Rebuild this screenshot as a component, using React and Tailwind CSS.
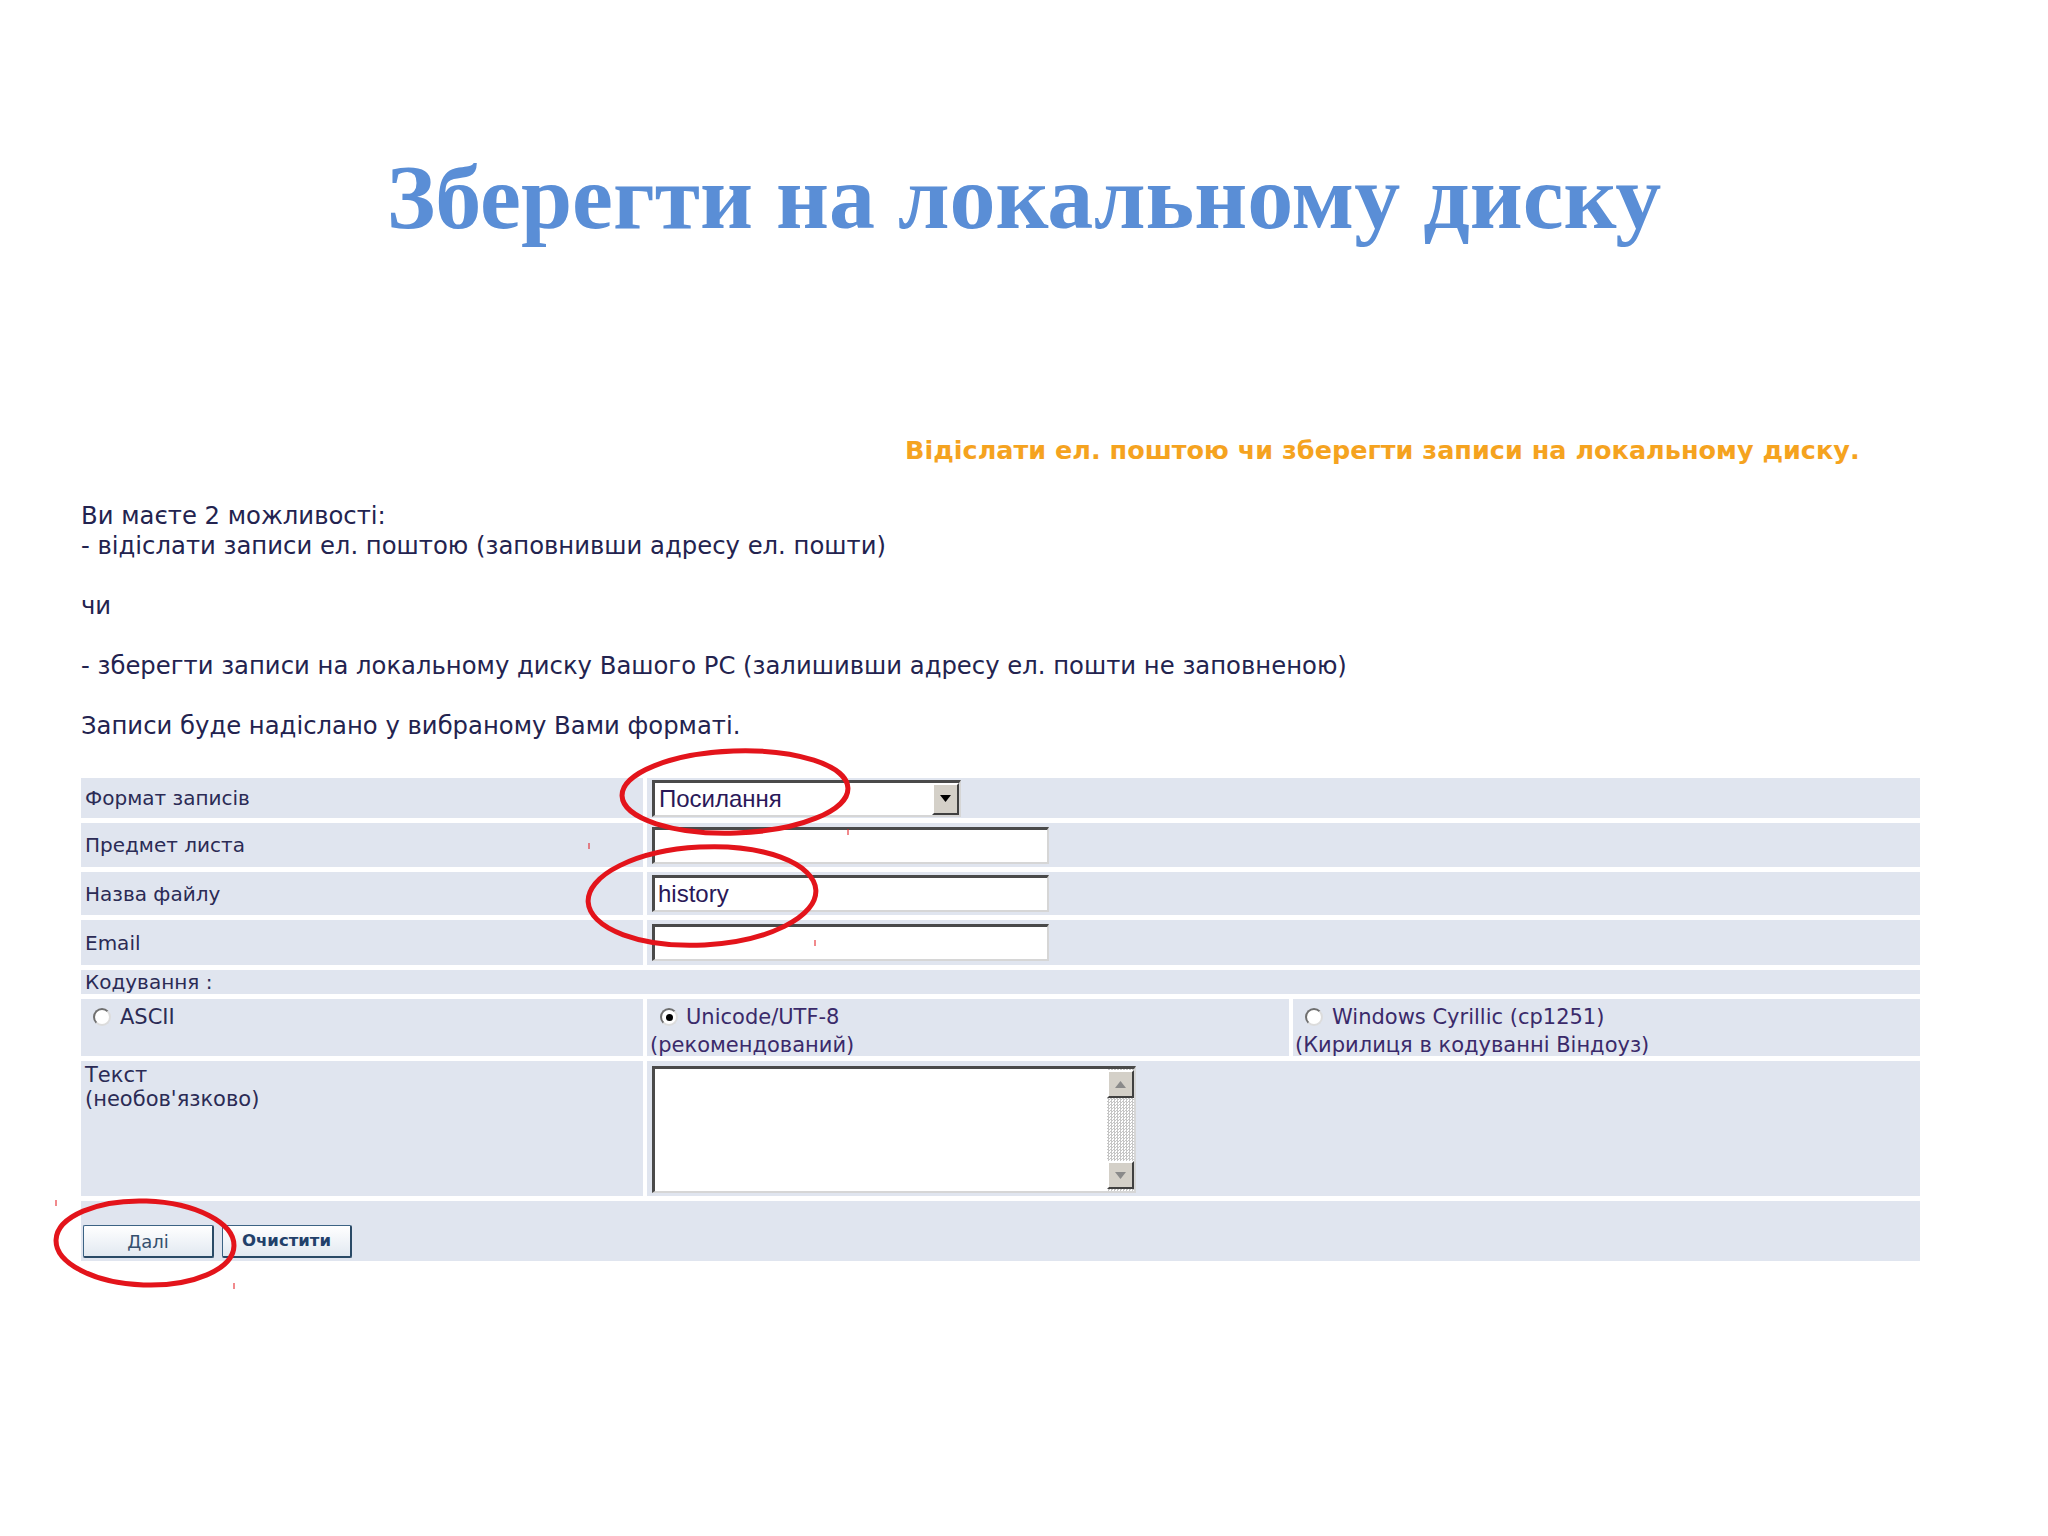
import React from "react"

function Radio({ checked }) {
  return (
    <span className="inline-flex h-[18px] w-[18px] shrink-0 items-center justify-center rounded-full border-2 border-t-[#6f6f6f] border-l-[#6f6f6f] border-b-[#dcdcdc] border-r-[#dcdcdc] bg-white">
      {checked && <span className="h-[7px] w-[7px] rounded-full bg-black" />}
    </span>
  )
}

function Field({ value, className = "" }) {
  return (
    <div className={`flex items-center border-t-[3px] border-l-[3px] border-b-2 border-r-2 border-t-[#4a4a4a] border-l-[#4a4a4a] border-b-[#d6d6d6] border-r-[#d6d6d6] bg-white pl-[3px] font-['Liberation_Sans',Arial,sans-serif] text-[24px] text-[#2a1858] ${className}`}>
      {value}
    </div>
  )
}

function ScrollBtn({ up }) {
  return (
    <div className="flex h-[28px] w-[27px] items-center justify-center border-2 border-t-white border-l-white border-b-[#404040] border-r-[#404040] bg-[#d4d0c8]">
      <svg width="11" height="7" viewBox="0 0 11 7">
        {up ? <path d="M0 7 L5.5 0 L11 7 Z" fill="#8a8a8a" /> : <path d="M0 0 L5.5 7 L11 0 Z" fill="#8a8a8a" />}
      </svg>
    </div>
  )
}

function Row({ label, children, h }) {
  return (
    <div className={`flex gap-[4px] ${h}`}>
      <div className="flex w-[562px] items-center bg-[#e0e5ef] px-[4px]">{label}</div>
      <div className="flex flex-1 items-center bg-[#e0e5ef] px-[5px]">{children}</div>
    </div>
  )
}

export default function App() {
  return (
    <div className="relative min-h-[1536px] w-[2048px] bg-white font-['DejaVu_Sans',Verdana,sans-serif]">
      <h1 className="pt-[150px] text-center font-['Liberation_Serif','Times_New_Roman',serif] text-[92px] font-bold leading-[94px] text-[#5a8ed6]">
        Зберегти на локальному диску
      </h1>

      <p className="mt-[191px] pl-[905px] text-[25.5px] font-bold leading-[30px] text-[#f5a31f]">
        Відіслати ел. поштою чи зберегти записи на локальному диску.
      </p>

      <div className="mt-[36px] pl-[81px] text-[24.3px] leading-[30px] text-[#23234f]">
        <p>Ви маєте 2 можливості:</p>
        <p>- відіслати записи ел. поштою (заповнивши адресу ел. пошти)</p>
        <p>&nbsp;</p>
        <p>чи</p>
        <p>&nbsp;</p>
        <p>- зберегти записи на локальному диску Вашого РС (залишивши адресу ел. пошти не заповненою)</p>
        <p>&nbsp;</p>
        <p>Записи буде надіслано у вибраному Вами форматі.</p>
      </div>

      <div className="ml-[81px] mt-[37px] flex w-[1839px] flex-col gap-[5px] text-[20px] text-[#2b2b55]">
        <Row label="Формат записів" h="h-[40px]">
          <div className="flex h-[37px] w-[309px] items-stretch border-t-[3px] border-l-[3px] border-b-2 border-r-2 border-t-[#4a4a4a] border-l-[#4a4a4a] border-b-[#d6d6d6] border-r-[#d6d6d6] bg-white">
            <div className="flex flex-1 items-center pl-[4px] font-['Liberation_Sans',Arial,sans-serif] text-[24px] text-[#2a1858]">Посилання</div>
            <div className="flex w-[27px] items-center justify-center border-2 border-t-white border-l-white border-b-[#404040] border-r-[#404040] bg-[#d4d0c8]">
              <svg width="11" height="7" viewBox="0 0 11 7">
                <path d="M0 0 L5.5 7 L11 0 Z" fill="#000" />
              </svg>
            </div>
          </div>
        </Row>
        <Row label="Предмет листа" h="h-[44px]">
          <Field className="h-[37px] w-[397px]" />
        </Row>
        <Row label="Назва файлу" h="h-[43px]">
          <Field className="h-[37px] w-[397px]" value="history" />
        </Row>
        <Row label="Email" h="h-[45px]">
          <Field className="h-[37px] w-[397px]" />
        </Row>

        <div className="flex h-[24px] items-center bg-[#e0e5ef] px-[4px]">Кодування :</div>

        <div className="flex h-[57px] gap-[4px] text-[21px] leading-[28px]">
          <div className="w-[562px] bg-[#e0e5ef] pl-[12px] pt-[4px]">
            <div className="flex items-center gap-[9px]">
              <Radio />
              <span>ASCII</span>
            </div>
          </div>
          <div className="w-[642px] bg-[#e0e5ef] pl-[3px] pt-[4px]">
            <div className="flex items-center gap-[8px] pl-[10px]">
              <Radio checked />
              <span className="text-[#3a2a6a]">Unicode/UTF-8</span>
            </div>
            <div className="text-[#3a2a6a]">(рекомендований)</div>
          </div>
          <div className="flex-1 bg-[#e0e5ef] pl-[2px] pt-[4px]">
            <div className="flex items-center gap-[9px] pl-[10px]">
              <Radio />
              <span className="text-[#3a2a6a]">Windows Cyrillic (cp1251)</span>
            </div>
            <div className="text-[#3a2a6a]">(Кирилиця в кодуванні Віндоуз)</div>
          </div>
        </div>

        <div className="flex h-[135px] gap-[4px]">
          <div className="w-[562px] bg-[#e0e5ef] px-[4px] pt-[2px] text-[21px] leading-[24px]">
            <div>Текст</div>
            <div>(необов'язково)</div>
          </div>
          <div className="flex-1 bg-[#e0e5ef] px-[5px] pt-[5px]">
            <div className="flex h-[127px] w-[484px] border-t-[3px] border-l-[3px] border-b-2 border-r-2 border-t-[#4a4a4a] border-l-[#4a4a4a] border-b-[#d6d6d6] border-r-[#d6d6d6] bg-white">
              <div className="flex-1" />
              <div className="flex w-[27px] flex-col justify-between bg-[image:repeating-conic-gradient(#c6c6c6_0%_25%,#ffffff_0%_50%)] bg-[length:3px_3px] pb-[2px] pt-[1px]">
                <ScrollBtn up />
                <ScrollBtn />
              </div>
            </div>
          </div>
        </div>

        <div className="flex h-[60px] items-end gap-[8px] bg-[#e0e5ef] pb-[3px] pl-[2px]">
          <button className="h-[33px] w-[131px] rounded-[2px] border border-b-2 border-r-2 border-[#3c6384] border-b-[#2a4a66] border-r-[#2a4a66] bg-gradient-to-b from-white to-[#e2e9f1] text-[18px] text-[#35506e]">
            Далі
          </button>
          <button className="h-[33px] w-[130px] rounded-[2px] border border-b-2 border-r-2 border-[#3c6384] border-b-[#2a4a66] border-r-[#2a4a66] bg-gradient-to-b from-white to-[#e2e9f1] text-[16.5px] font-bold text-[#22406a]">
            Очистити
          </button>
        </div>
      </div>

      <svg className="pointer-events-none absolute left-0 top-0" width="2048" height="1536" viewBox="0 0 2048 1536">
        <g fill="none" stroke="#e3141b" strokeWidth="5">
          <ellipse cx="735" cy="792" rx="113" ry="41" transform="rotate(-2 735 792)" />
          <ellipse cx="702" cy="896" rx="114" ry="49" transform="rotate(-3 702 896)" />
          <ellipse cx="145" cy="1243" rx="89" ry="42" transform="rotate(2 145 1243)" />
        </g>
        <g stroke="#e3141b" strokeWidth="1">
          <line x1="589" y1="843" x2="589" y2="849" />
          <line x1="848" y1="829" x2="848" y2="835" />
          <line x1="815" y1="940" x2="815" y2="946" />
          <line x1="56" y1="1200" x2="56" y2="1206" />
          <line x1="234" y1="1283" x2="234" y2="1289" />
        </g>
      </svg>
    </div>
  )
}
